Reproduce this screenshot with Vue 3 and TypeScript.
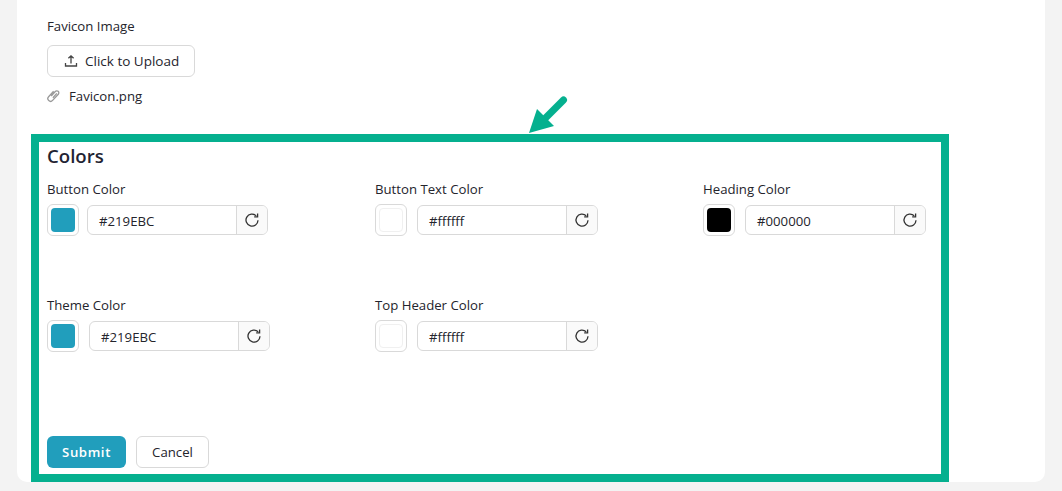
<template>
  <div class="page">
    <main class="card">
      <section class="favicon">
        <div class="label">Favicon Image</div>
        <button class="upload" type="button">
          <svg width="14" height="14" viewBox="0 0 14 14" fill="none" stroke="#444" stroke-width="1.3">
            <path d="M7 9.5V2M4.4 4.3 7 1.8l2.6 2.5M1.5 9v3h11V9" />
          </svg>
          <span>Click to Upload</span>
        </button>
        <div class="file">
          <svg width="14" height="14" viewBox="0 0 14 14" fill="none" stroke="#999" stroke-width="1.3">
            <path d="M4.2 7 8.3 2.5a2 2 0 0 1 3 2.7l-5.7 6.2a2.7 2.7 0 0 1-4-3.7l5-5.4M5.9 8.8l3.9-4.4" />
          </svg>
          <span>Favicon.png</span>
        </div>
      </section>

      <section class="colors">
        <h2>Colors</h2>
        <div class="grid">
          <div v-for="c in colors" :key="c.label" class="field">
            <div class="label">{{ c.label }}</div>
            <div class="row" :class="{ wide: c.wide }">
              <div class="swatch"><span :style="{ background: c.value }" :class="{ blank: c.value === '#ffffff' }"></span></div>
              <div class="input">
                <span class="value">{{ c.value }}</span>
                <button class="reset" type="button" aria-label="Reset">
                  <svg width="16" height="16" viewBox="0 0 16 16" fill="none" stroke="#333" stroke-width="1.3">
                    <path d="M14 8.2A6 6 0 1 1 12.2 3.8" />
                    <path d="M13.6 1.4v3.4h-3.4" />
                  </svg>
                </button>
              </div>
            </div>
          </div>
        </div>
        <div class="actions">
          <button class="submit" type="button">Submit</button>
          <button class="cancel" type="button">Cancel</button>
        </div>
      </section>

      <div class="highlight"></div>
      <svg class="arrow" width="42" height="42" viewBox="0 0 42 42">
        <path d="M34.5 6 17 23.5" stroke="#05b08f" stroke-width="7" stroke-linecap="round" />
        <path d="M0 39 8 15 25 32Z" fill="#05b08f" />
      </svg>
    </main>
  </div>
</template>

<script setup lang="ts">
interface ColorField {
  label: string;
  value: string;
  wide?: boolean;
}

const colors: ColorField[] = [
  { label: "Button Color", value: "#219EBC" },
  { label: "Button Text Color", value: "#ffffff", wide: true },
  { label: "Heading Color", value: "#000000", wide: true },
  { label: "Theme Color", value: "#219EBC", wide: true },
  { label: "Top Header Color", value: "#ffffff", wide: true },
];
</script>

<style>
html,
body {
  margin: 0;
  background: #f3f3f3;
}
</style>

<style scoped>
.page {
  height: 491px;
  overflow: hidden;
  padding: 0 17px 9px;
  box-sizing: border-box;
  font-family: "Open Sans", "Noto Sans", sans-serif;
  font-size: 13.2px;
  color: #24242c;
}

.card {
  position: relative;
  height: 482px;
  box-sizing: border-box;
  padding: 17px 30px 14px;
  background: #fff;
  border-radius: 0 0 10px 10px;
}

.label {
  line-height: 18px;
}

.upload {
  display: flex;
  align-items: center;
  gap: 7px;
  width: 148px;
  height: 32px;
  margin-top: 10px;
  padding: 0 0 0 16px;
  background: #fff;
  border: 1px solid #d9d9d9;
  border-radius: 6px;
  font: inherit;
  font-size: 13.5px;
  line-height: 18px;
  color: inherit;
}

.upload span {
  margin-top: -1px;
}

.file {
  display: flex;
  align-items: center;
  gap: 8px;
  height: 20px;
  margin-top: 9px;
}

.colors {
  margin-top: 38px;
}

h2 {
  margin: 0;
  font-size: 18.6px;
  font-weight: 600;
  line-height: 24px;
  color: #1f2433;
}

.grid {
  display: grid;
  grid-template-columns: repeat(3, 328px);
  grid-auto-rows: 116px;
  margin-top: 12px;
}

.row {
  display: flex;
  align-items: center;
  gap: 8px;
  margin-top: 6px;
}

.row.wide {
  gap: 10px;
}

.swatch {
  display: flex;
  width: 32px;
  height: 32px;
  box-sizing: border-box;
  padding: 3px;
  border: 1px solid #d9d9d9;
  border-radius: 6px;
}

.swatch span {
  flex: 1;
  border-radius: 4px;
}

.swatch span.blank {
  border: 1px solid #f0f0f0;
}

.input {
  display: flex;
  align-items: center;
  width: 181px;
  height: 30px;
  box-sizing: border-box;
  border: 1px solid #d9d9d9;
  border-radius: 6px;
}

.value {
  flex: 1;
  padding: 1px 0 0 11px;
}

.reset {
  display: flex;
  align-items: center;
  justify-content: center;
  width: 31px;
  height: 100%;
  padding: 0;
  background: #fafafa;
  border: 0;
  border-left: 1px solid #d9d9d9;
  border-radius: 0 5px 5px 0;
}

.actions {
  display: flex;
  gap: 10px;
  margin-top: 24px;
}

.actions button {
  width: 73px;
  height: 32px;
  padding: 0;
  border-radius: 6px;
  font: inherit;
}

.submit {
  width: 79px !important;
  background: #219ebc;
  border: 0;
  color: #fff;
  font-weight: 600 !important;
  letter-spacing: 0.6px;
}

.cancel {
  background: #fff;
  border: 1px solid #d9d9d9;
  color: inherit;
}

.highlight {
  position: absolute;
  left: 14px;
  top: 134px;
  width: 918px;
  height: 348px;
  box-sizing: border-box;
  border: 8px solid #05b08f;
  pointer-events: none;
}

.arrow {
  position: absolute;
  left: 512px;
  top: 94px;
}
</style>
